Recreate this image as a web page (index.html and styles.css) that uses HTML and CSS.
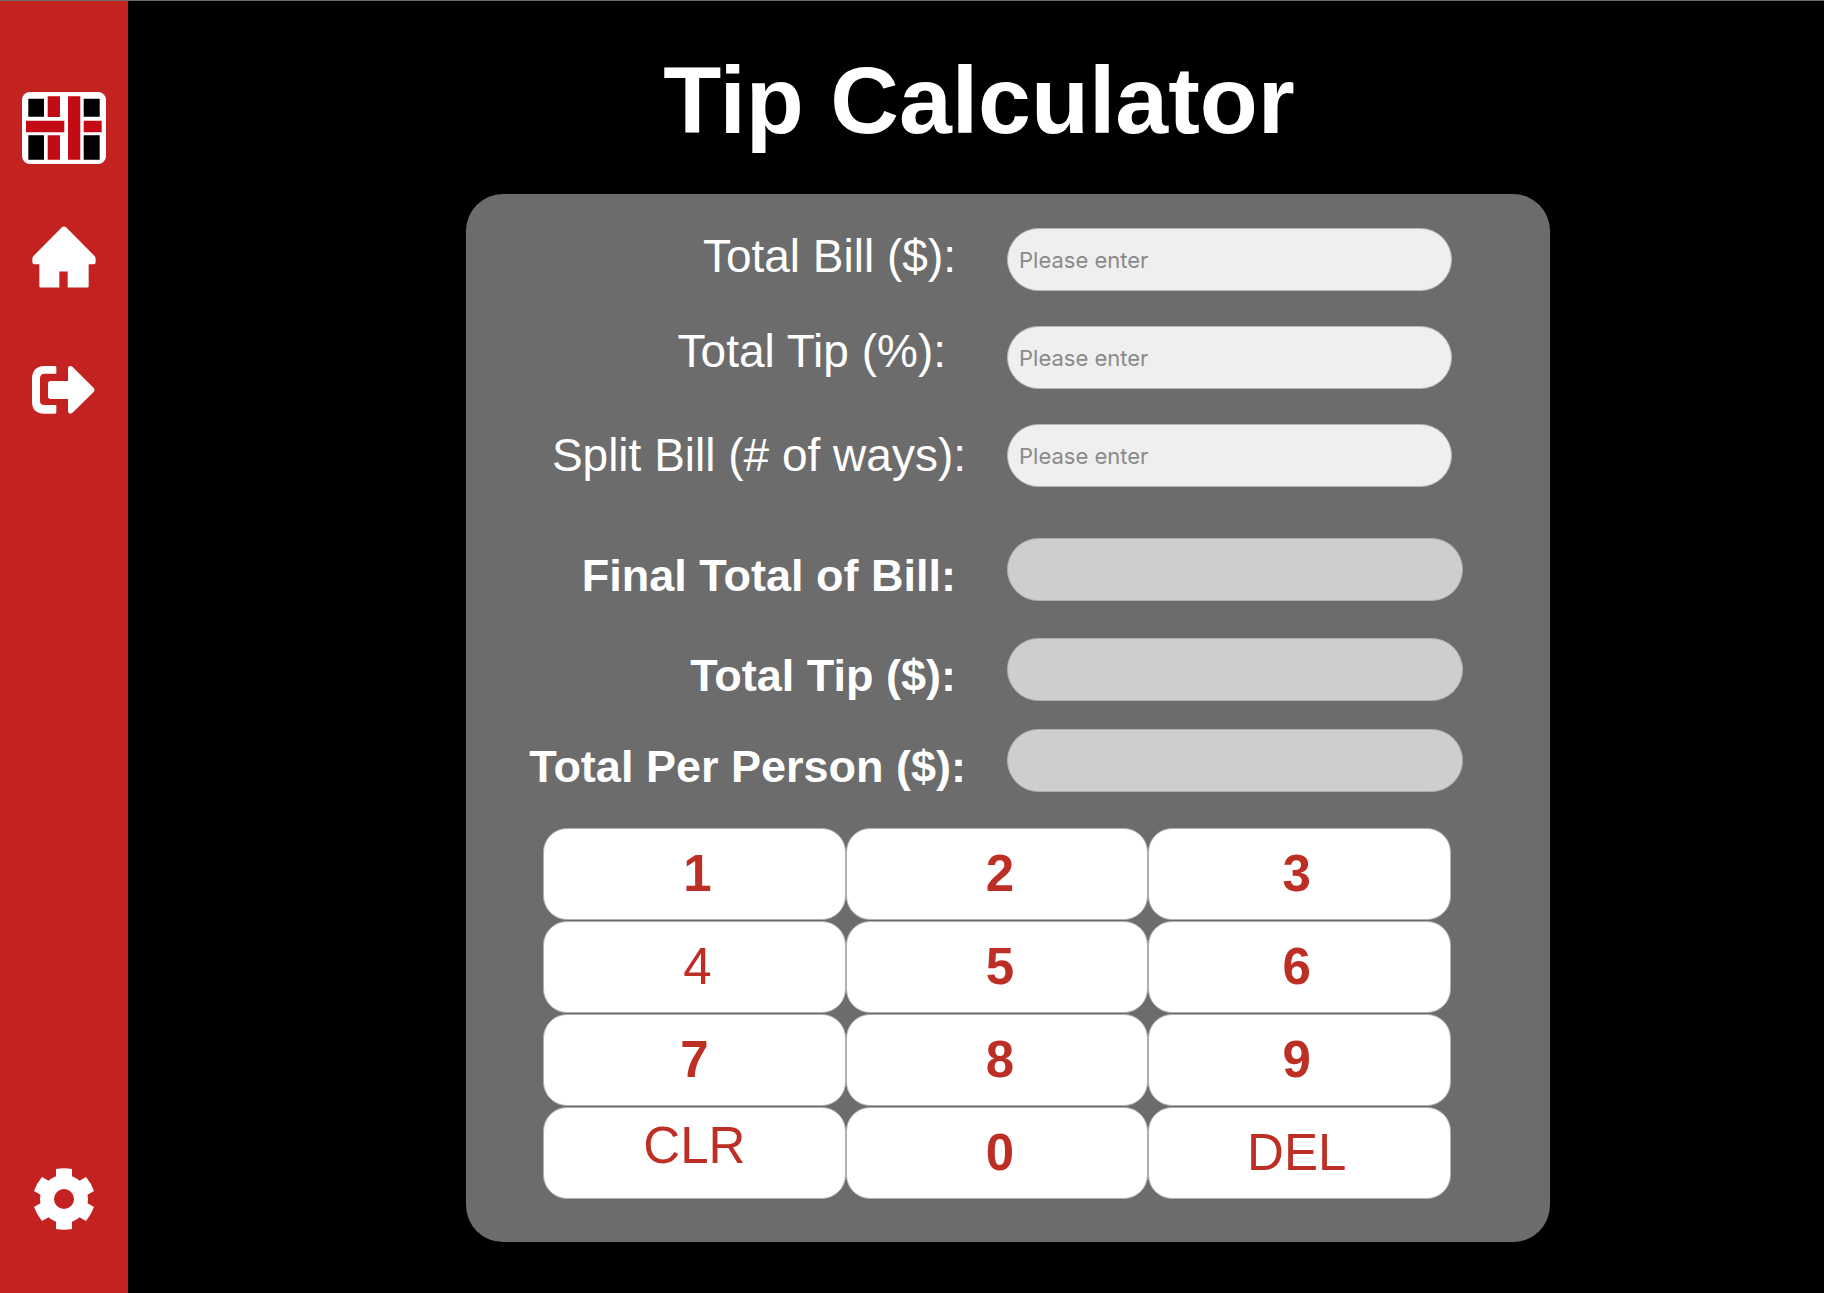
FILE: index.html
```html
<!DOCTYPE html>
<html lang="en">
<head>
<meta charset="utf-8">
<meta name="viewport" content="width=device-width, initial-scale=1">
<title>Tip Calculator</title>
<link rel="stylesheet" href="styles.css">
</head>
<body>
<div class="app">
  <nav class="sidebar" aria-label="Main">
    <a class="nav-link nav-logo" href="#" aria-label="Start">
      <svg width="84" height="72" viewBox="0 0 84 72" aria-hidden="true">
        <rect width="84" height="72" rx="8" fill="#fff"/>
        <path fill="#000" d="M6.3 6.7H22v18H6.3zM61.7 6.7h16v18h-16zM6.3 43.3H22v24.4H6.3zM61.7 43.3h16v24.4h-16z"/>
        <path fill="#c40a14" d="M25.7 4.3H38V25H25.7zM25.7 43.3H38v24.4H25.7zM46 4.3h12.3v63.4H46zM4 28.7h38.3v11.6H4zM61.7 28.7h18v11.6h-18z"/>
      </svg>
    </a>
    <a class="nav-link nav-home" href="#" aria-label="Home">
      <svg width="64" height="62" viewBox="94 77 192 185" aria-hidden="true">
        <path fill="#fff" d="M183 81q7-6 14 0l84 85q4 4 4 10v9q0 6-6 6h-15v66q0 4-4 4h-59v-48h-25v48h-56q-4 0-4-4v-66h-15q-6 0-6-6v-9q0-6 4-10z"/>
      </svg>
    </a>
    <a class="nav-link nav-exit" href="#" aria-label="Log out">
      <svg width="63" height="48" viewBox="94 498 189 144" aria-hidden="true">
        <path fill="#fff" d="M130 498h33q4 0 4 4v19h-35q-14 0-14 14v68q0 12 14 12h35v22q0 4-4 4h-33q-36-2-36-36v-71q2-34 36-36z"/>
        <path fill="#fff" d="M202 505q0-7 7-7 4 0 7 3l63 63q5 6 0 12l-62 61q-4 4-8 4-7 0-7-7v-37h-52q-8 0-8-8v-38q0-8 8-8h52z"/>
      </svg>
    </a>
    <a class="nav-link nav-settings" href="#" aria-label="Settings">
      <svg width="62" height="62" viewBox="-31 -31 62 62" aria-hidden="true">
        <defs>
          <path id="tooth" d="M-8-20v-10q8-1.500 16 0v10z"/>
        </defs>
        <g fill="#fff">
          <path fill-rule="evenodd" d="M-24 0a24 24 0 1 1 48 0a24 24 0 1 1-48 0zM-10 0a10 10 0 1 0 20 0a10 10 0 1 0-20 0z"/>
          <use href="#tooth"/>
          <use href="#tooth" transform="rotate(60)"/>
          <use href="#tooth" transform="rotate(120)"/>
          <use href="#tooth" transform="rotate(180)"/>
          <use href="#tooth" transform="rotate(240)"/>
          <use href="#tooth" transform="rotate(300)"/>
        </g>
      </svg>
    </a>
  </nav>
  <main class="main">
    <h1 class="title">Tip Calculator</h1>
    <form class="panel">
      <div class="entries">
        <div class="row">
          <label class="label" for="bill">Total Bill ($):</label>
          <input class="field" id="bill" type="text" inputmode="decimal" placeholder="Please enter">
        </div>
        <div class="row">
          <label class="label label-short" for="tip">Total Tip (%):</label>
          <input class="field" id="tip" type="text" inputmode="decimal" placeholder="Please enter">
        </div>
        <div class="row">
          <label class="label label-long" for="split">Split Bill (# of ways):</label>
          <input class="field" id="split" type="text" inputmode="numeric" placeholder="Please enter">
        </div>
      </div>
      <div class="results">
        <div class="row row-final">
          <label class="label" for="final">Final Total of Bill:</label>
          <output class="field" id="final"></output>
        </div>
        <div class="row">
          <label class="label" for="tip-total">Total Tip ($):</label>
          <output class="field" id="tip-total"></output>
        </div>
        <div class="row">
          <label class="label label-long" for="person">Total Per Person ($):</label>
          <output class="field" id="person"></output>
        </div>
      </div>
      <div class="keypad">
        <button class="key key-inset" type="button">1</button>
        <button class="key key-inset" type="button">2</button>
        <button class="key key-last" type="button">3</button>
        <button class="key key-light key-inset" type="button">4</button>
        <button class="key key-inset" type="button">5</button>
        <button class="key key-last" type="button">6</button>
        <button class="key" type="button">7</button>
        <button class="key key-inset" type="button">8</button>
        <button class="key key-last" type="button">9</button>
        <button class="key key-light key-clear" type="button">CLR</button>
        <button class="key key-inset" type="button">0</button>
        <button class="key key-light key-last" type="button">DEL</button>
      </div>
    </form>
  </main>
</div>
</body>
</html>
```
FILE: styles.css
```css
* {
  box-sizing: border-box;
}

body {
  margin: 0;
  border-top: 1px solid #6c6c6c;
  background: #000;
  color: #fff;
  font-family: "Liberation Sans", Arial, sans-serif;
}

.app {
  display: flex;
  min-height: calc(100vh - 1px);
}

/* Sidebar */
.sidebar {
  display: flex;
  flex: 0 0 128px;
  flex-direction: column;
  align-items: center;
  padding: 91px 1px 63px 0;
  background: #c42220;
}

.nav-link,
.nav-link svg {
  display: block;
}

.nav-home {
  margin-top: 62px;
}

.nav-exit {
  margin-top: 78px;
}

.nav-settings {
  margin-top: auto;
}

/* Main area */
.main {
  display: grid;
  flex: 1;
  grid-template-columns: 338fr 1084fr 274fr;
  align-content: start;
  padding: 43px 0 51px;
}

.title {
  grid-column: 1 / -1;
  margin: 0 0 38px;
  padding-left: 6px;
  font-size: 95px;
  line-height: 112px;
  text-align: center;
}

.panel {
  grid-column: 2;
  padding: 34px 0 43px;
  border-radius: 37px;
  background: #6c6c6c;
}

.row {
  display: grid;
  grid-template-columns: 541fr 543fr;
  align-items: center;
}

.entries {
  display: grid;
  gap: 35px;
}

.results {
  display: grid;
  gap: 28px;
  margin-top: 51px;
}

.row-final {
  margin-bottom: 9px;
}

.label {
  padding: 0 51px 8px 0;
  font-size: 46px;
  line-height: 48px;
  text-align: right;
}

.label-short {
  padding-right: 61px;
  padding-bottom: 14px;
}

.label-long {
  padding-right: 41px;
  padding-bottom: 2px;
}

.results .label {
  padding-top: 12px;
  padding-bottom: 0;
  font-size: 45px;
  font-weight: bold;
}

.field {
  display: block;
  width: 82%;
  height: 63px;
  padding: 0 11px;
  border: 1px solid #b8b8b8;
  border-radius: 32px;
  background: #efefef;
  color: #333;
  font-family: Inter, sans-serif;
  font-size: 22px;
}

.field::placeholder {
  color: #8a8a8a;
  opacity: 1;
}

.results .field {
  width: 84%;
  border-color: #b0b0b0;
  background: #cecece;
}

/* Keypad */
.keypad {
  display: grid;
  grid-template-columns: repeat(3, 1fr);
  grid-auto-rows: 92px;
  row-gap: 1px;
  margin: 36px 99px 0 77px;
}

.key {
  padding: 0;
  border: 1px solid #b0b0b0;
  border-radius: 24px;
  background: #fff;
  color: #bd2f24;
  font-family: inherit;
  font-size: 51px;
  font-weight: bold;
  line-height: 60px;
}

.key-inset {
  padding-left: 6px;
}

.key-last {
  padding-right: 6px;
}

.key-light {
  font-weight: normal;
}

.key-clear {
  padding-bottom: 14px;
}
```
